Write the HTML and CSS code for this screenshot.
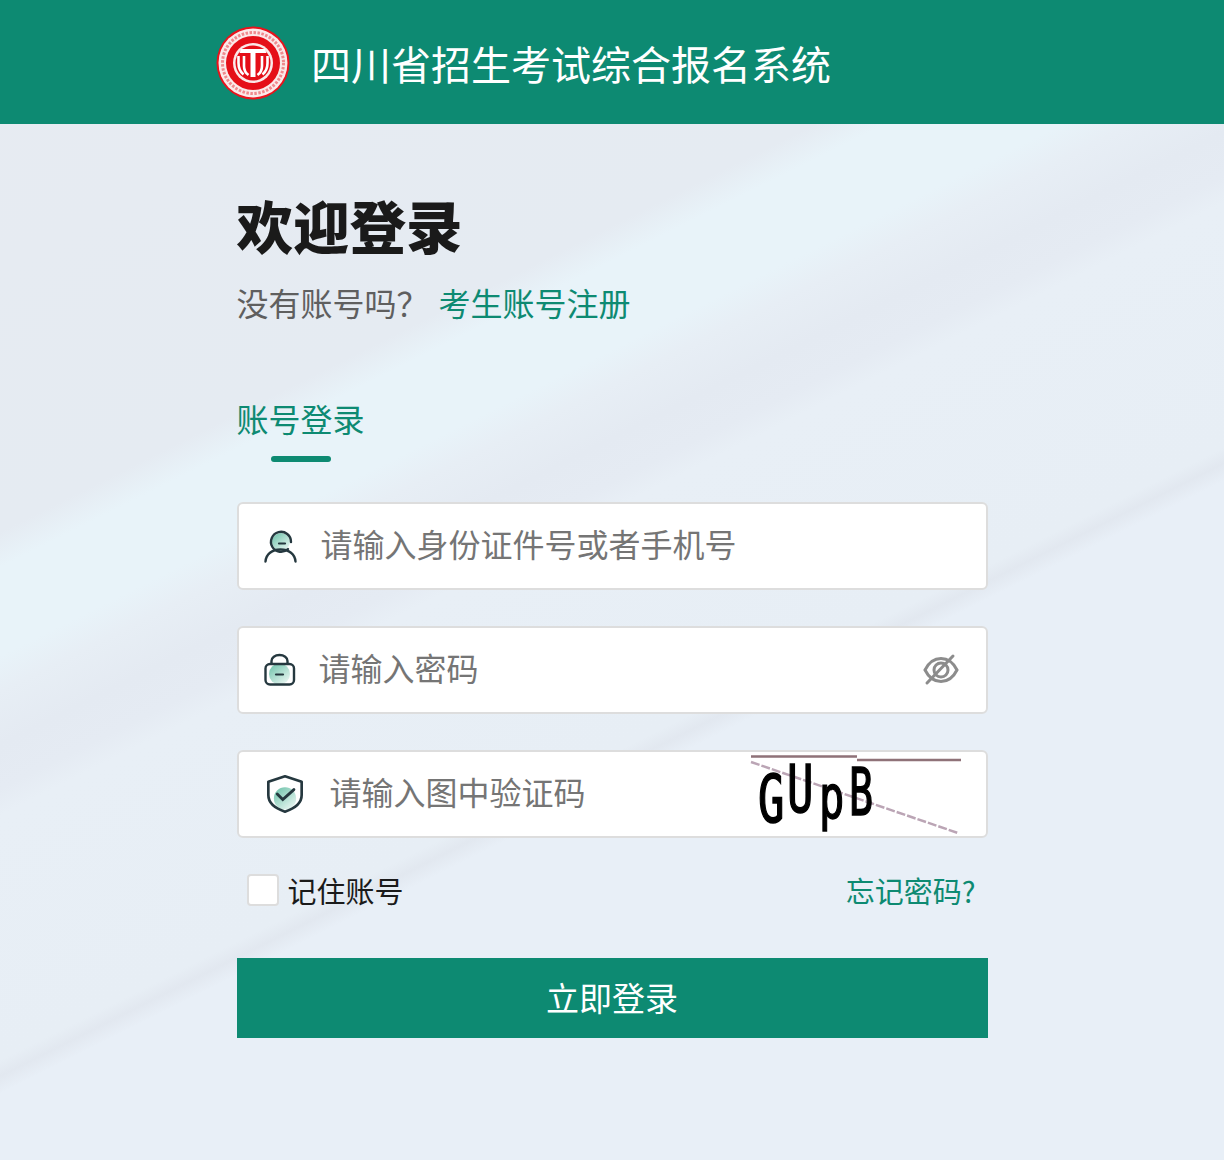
FILE: index.html
```html
<!DOCTYPE html>
<html lang="zh-CN">
<head>
    <meta charset="UTF-8">
    <meta name="viewport" content="width=device-width, initial-scale=1.0">
    <title>四川省招生考试综合报名系统</title>
    <link rel="stylesheet" href="styles.css">
</head>
<body>
    <header class="top-bar">
        <svg class="logo" viewBox="0 0 74 74" aria-hidden="true">
            <circle cx="37" cy="37" r="36.500" fill="#e8131c"/>
            <circle cx="37" cy="37" r="34.500" fill="#fbeaea"/>
            <circle cx="37" cy="37" r="30.500" fill="none" stroke="#f08a8e" stroke-width="3" stroke-dasharray="2.500 1.500"/>
            <circle cx="37" cy="37" r="27" fill="#e50f18"/>
            <circle cx="37" cy="37" r="20" fill="#fbe9e9"/>
            <circle cx="37" cy="37" r="17.500" fill="#e50f18"/>
            <path d="M25 23h24l1.500 4H23.500z" fill="#fff"/>
            <path d="M34.500 27h5v24h-5z" fill="#fff"/>
            <path d="M28 30v10c0 4 1.500 7 4.500 9M46 30v10c0 4-1.500 7-4.500 9M22.500 30v7c0 5 2 9 5 11.500M51.500 30v7c0 5-2 9-5 11.500" fill="none" stroke="#fff" stroke-width="2.600"/>
        </svg>
        <span class="site-name">四川省招生考试综合报名系统</span>
    </header>

    <main class="login-box">
        <h1>欢迎登录</h1>
        <p class="register-line">没有账号吗？<a href="#">考生账号注册</a></p>

        <div class="tab-title">账号登录</div>

        <form>
            <div class="form-group">
                <svg class="field-icon" viewBox="0 0 36 36" aria-hidden="true">
                    <defs>
                        <linearGradient id="mintA" x1="0.100" y1="0" x2="0.900" y2="1">
                            <stop offset="0" stop-color="#6fc3ab"/>
                            <stop offset="1" stop-color="#f0f9f6"/>
                        </linearGradient>
                    </defs>
                    <circle cx="19" cy="14" r="9" fill="url(#mintA)"/>
                    <path d="M26 21A10 10 0 1 1 29 14" fill="none" stroke="#25383f" stroke-width="2.400" stroke-linecap="round"/>
                    <path d="M17 15.500h6" stroke="#25383f" stroke-width="2.200" stroke-linecap="round"/>
                    <path d="M3.500 33.500C4 26 10 21.500 18.500 21.500S33 26 33.500 33.500" fill="none" stroke="#25383f" stroke-width="2.400" stroke-linecap="round"/>
                </svg>
                <input class="user-input" type="text" placeholder="请输入身份证件号或者手机号">
            </div>

            <div class="form-group">
                <svg class="field-icon" viewBox="0 0 36 36" aria-hidden="true">
                    <circle cx="17.500" cy="22" r="10.500" fill="url(#mintA)"/>
                    <path d="M9.500 13V9C9.500 5.500 13 3 17.500 3S25.500 5.500 25.500 9V13" fill="none" stroke="#25383f" stroke-width="2.400"/>
                    <rect x="3.500" y="12" width="28.500" height="20.500" rx="4.500" fill="none" stroke="#25383f" stroke-width="2.400"/>
                    <path d="M14 22.500h7" stroke="#25383f" stroke-width="2.200" stroke-linecap="round"/>
                </svg>
                <input class="pass-input" type="password" placeholder="请输入密码">
                <svg class="eye-icon" viewBox="0 0 36 36" aria-hidden="true">
                    <path d="M2 18C6 10 11 6.500 18 6.500S30 10 34 18C30 26 25 29.500 18 29.500S6 26 2 18z" fill="none" stroke="#8c8c8c" stroke-width="3"/>
                    <circle cx="18" cy="18" r="7" fill="none" stroke="#8c8c8c" stroke-width="3"/>
                    <path d="M4 31 30 4" stroke="#8c8c8c" stroke-width="3" stroke-linecap="round"/>
                </svg>
            </div>

            <div class="form-group">
                <svg class="shield-icon" viewBox="0 0 36 36" aria-hidden="true">
                    <circle cx="18" cy="22" r="10" fill="url(#mintA)"/>
                    <path d="M18 2 33 7v12c0 7-6 12-15 15C9 31 3 26 3 19V7z" fill="none" stroke="#25383f" stroke-width="2.400" stroke-linejoin="round"/>
                    <path d="M11 18l5 5 10-9" fill="none" stroke="#25383f" stroke-width="2.600" stroke-linecap="round"/>
                </svg>
                <input class="code-input" type="text" placeholder="请输入图中验证码">
                <svg class="captcha" viewBox="0 0 210 80" role="img" aria-label="验证码">
                    <rect width="210" height="80" fill="#fff"/>
                    <path d="M0 2.500h106M106 6h104" fill="none" stroke="#8f7278" stroke-width="2.500"/>
                    <path d="M0 8 207 79" fill="none" stroke="#bba5b5" stroke-width="2.500" stroke-dasharray="9 2"/>
                    <text class="captcha-text" transform="translate(7 68) scale(1.100 1.650)">G</text>
                    <text class="captcha-text" transform="translate(36 58) scale(1.100 1.650)">U</text>
                    <text class="captcha-text" transform="translate(68 64) scale(1.050 1.500)">p</text>
                    <text class="captcha-text" transform="translate(98 61) scale(1 1.650)">B</text>
                </svg>
            </div>

            <div class="options-row">
                <label class="remember">
                    <input type="checkbox">
                    记住账号
                </label>
                <a href="#" class="forgot">忘记密码?</a>
            </div>

            <button type="submit" class="submit-btn">立即登录</button>
        </form>
    </main>
</body>
</html>
```

FILE: styles.css
```css
* {
    box-sizing: border-box;
}
body {
    margin: 0;
    min-height: 1160px;
    font-family: "Noto Sans CJK SC", "Liberation Sans", sans-serif;
    color: #1a1a1a;
    background: linear-gradient(153.4deg,
        #e7ebf2 0%, #e5ebf2 30%,
        #e8f3f9 32%, #e8f3f9 37%,
        #e7eef5 39%, #e4eaf2 42%, #e5ebf3 44.500%,
        #e8eff6 46%, #e7eef5 59.800%,
        #e2e8f0 60.700%, #e8eff7 61.700%, #e8eff7 100%);
}
.top-bar {
    display: flex;
    align-items: center;
    height: 124px;
    padding: 1px 0 0 216px;
    background: #0d8a72;
}
.logo {
    width: 74px;
    height: 74px;
}
.site-name {
    margin-left: 21px;
    font-size: 40px;
    font-weight: 400;
    color: #fff;
}
.login-box {
    width: 751px;
    margin: 0 auto;
    padding-top: 60px;
}
h1 {
    margin: 0;
    font-size: 56.500px;
    line-height: 80px;
    font-weight: 900;
}
.register-line {
    margin: 15px 0 0;
    font-size: 32px;
    line-height: 46px;
    font-weight: 400;
    color: #5f5f5f;
}
.register-line a {
    margin-left: 10px;
    color: #0d8a72;
    text-decoration: none;
}
.tab-title {
    position: relative;
    margin-top: 70px;
    height: 67px;
    font-size: 32px;
    line-height: 46px;
    font-weight: 400;
    color: #0d8a72;
}
.tab-title::after {
    content: "";
    position: absolute;
    left: 34px;
    bottom: 0;
    width: 60px;
    height: 6px;
    border-radius: 3px;
    background: #0d8a72;
}
form {
    margin-top: 40px;
}
.form-group {
    display: flex;
    align-items: center;
    height: 88px;
    margin-bottom: 36px;
    padding-left: 23px;
    background: #fff;
    border: 2px solid #ddd;
    border-radius: 6px;
}
.field-icon {
    flex: none;
    width: 36px;
    height: 36px;
}
.shield-icon {
    flex: none;
    width: 40px;
    height: 40px;
    margin-left: 3px;
}
input[type="text"], input[type="password"] {
    flex: 1;
    min-width: 0;
    height: 100%;
    padding: 0 0 6px;
    border: none;
    outline: none;
    background: transparent;
    font-family: inherit;
    font-size: 32px;
    font-weight: 400;
}
input::placeholder {
    color: #757575;
    opacity: 1;
}
.user-input {
    margin-left: 23px;
}
.pass-input {
    margin-left: 21px;
}
.code-input {
    margin-left: 25px;
}
.eye-icon {
    flex: none;
    width: 36px;
    height: 36px;
    margin-right: 27px;
}
.captcha {
    flex: none;
    width: 210px;
    height: 80px;
    margin-right: 25px;
    overflow: visible;
}
.captcha-text {
    font-family: "DejaVu Sans Mono", monospace;
    font-size: 40px;
    fill: #000;
    stroke: #000;
    stroke-width: 1;
}
.options-row {
    display: flex;
    justify-content: space-between;
    align-items: center;
    height: 40px;
    margin-top: -4px;
    padding: 0 12px 0 10px;
    line-height: 40px;
}
.remember {
    display: flex;
    align-items: center;
    font-size: 29px;
    font-weight: 400;
}
.remember input {
    appearance: none;
    width: 32px;
    height: 32px;
    margin: 0 9px 0 0;
    background: #fff;
    border: 2px solid #ddd;
    border-radius: 4px;
}
.forgot {
    font-size: 29px;
    font-weight: 400;
    color: #0d8a72;
    text-decoration: none;
}
.submit-btn {
    display: block;
    width: 100%;
    height: 80px;
    margin-top: 48px;
    padding-bottom: 3px;
    border: none;
    background: #0d8a72;
    color: #fff;
    font-family: inherit;
    font-size: 33px;
    font-weight: 400;
    cursor: pointer;
}
```
